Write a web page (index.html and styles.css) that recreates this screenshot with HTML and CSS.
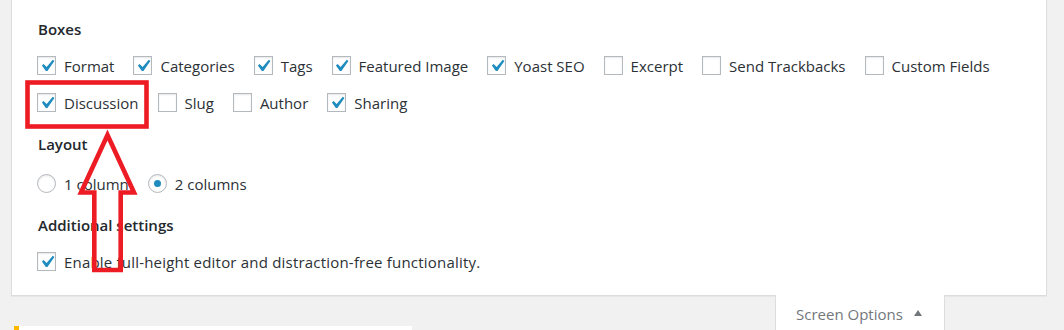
FILE: index.html
```html
<!DOCTYPE html>
<html lang="en">
<head>
    <meta charset="UTF-8">
    <meta name="viewport" content="width=device-width, initial-scale=1.0">
    <title>Screen Options</title>
    <link rel="stylesheet" href="styles.css">
</head>
<body>
<div class="page">
    <div class="screen-meta">
        <div class="group">
            <h5 class="group-title">Boxes</h5>
            <div class="options">
                <label class="opt"><span class="cb checked"><svg viewBox="0 0 20 20"><path d="M14.83 4.89l1.34.94-5.81 8.38H9.02L5.78 9.67l1.34-1.25 2.57 2.4z"/></svg></span>Format</label>
                <label class="opt"><span class="cb checked"><svg viewBox="0 0 20 20"><path d="M14.83 4.89l1.34.94-5.81 8.38H9.02L5.78 9.67l1.34-1.25 2.57 2.4z"/></svg></span>Categories</label>
                <label class="opt"><span class="cb checked"><svg viewBox="0 0 20 20"><path d="M14.83 4.89l1.34.94-5.81 8.38H9.02L5.78 9.67l1.34-1.25 2.57 2.4z"/></svg></span>Tags</label>
                <label class="opt"><span class="cb checked"><svg viewBox="0 0 20 20"><path d="M14.83 4.89l1.34.94-5.81 8.38H9.02L5.78 9.67l1.34-1.25 2.57 2.4z"/></svg></span>Featured Image</label>
                <label class="opt"><span class="cb checked"><svg viewBox="0 0 20 20"><path d="M14.83 4.89l1.34.94-5.81 8.38H9.02L5.78 9.67l1.34-1.25 2.57 2.4z"/></svg></span>Yoast SEO</label>
                <label class="opt"><span class="cb"></span>Excerpt</label>
                <label class="opt"><span class="cb"></span>Send Trackbacks</label>
                <label class="opt"><span class="cb"></span>Custom Fields</label>
                <label class="opt"><span class="cb checked"><svg viewBox="0 0 20 20"><path d="M14.83 4.89l1.34.94-5.81 8.38H9.02L5.78 9.67l1.34-1.25 2.57 2.4z"/></svg></span>Discussion</label>
                <label class="opt"><span class="cb"></span>Slug</label>
                <label class="opt"><span class="cb"></span>Author</label>
                <label class="opt"><span class="cb checked"><svg viewBox="0 0 20 20"><path d="M14.83 4.89l1.34.94-5.81 8.38H9.02L5.78 9.67l1.34-1.25 2.57 2.4z"/></svg></span>Sharing</label>
            </div>
        </div>
        <div class="group">
            <h5 class="group-title">Layout</h5>
            <div class="options radios">
                <label class="opt"><span class="radio"></span>1 column</label>
                <label class="opt"><span class="radio checked"></span>2 columns</label>
            </div>
        </div>
        <div class="group">
            <h5 class="group-title">Additional settings</h5>
            <div class="options">
                <label class="opt long"><span class="cb checked"><svg viewBox="0 0 20 20"><path d="M14.83 4.89l1.34.94-5.81 8.38H9.02L5.78 9.67l1.34-1.25 2.57 2.4z"/></svg></span>Enable full-height editor and distraction-free functionality.</label>
            </div>
        </div>
    </div>

    <div class="tabs">
        <div class="tab">Screen Options <span class="caret"></span></div>
    </div>

    <div class="notice"></div>

    <!-- annotation drawn over the screenshot -->
    <svg class="annot" width="1064" height="330" viewBox="0 0 1064 330">
        <rect x="27.5" y="82.5" width="119" height="44" />
        <polygon points="107.5,135 81,192.5 94.3,192.5 94.3,270 120.7,270 120.7,192.5 134,192.5" />
    </svg>
</div>
</body>
</html>
```

FILE: styles.css
```css
body { margin: 0; background: #f1f1f1; font-family: "Open Sans", "Noto Sans", sans-serif; font-size: 15px; color: #2c3136; }
.page { position: relative; height: 330px; overflow: hidden; padding-left: 11px; }

.screen-meta { box-sizing: border-box; width: 1036px; background: #fff; border: 1px solid #ddd; border-top: none; padding: 19px 0 15px 26px; box-shadow: 0 1px 1px rgba(0,0,0,.04); }
.group + .group { margin-top: 13px; }
.group-title { margin: 0; font-size: 15px; font-weight: 600; line-height: 20px; color: #23282d; }
.options { display: flex; flex-wrap: wrap; margin-top: 8px; }
.options.radios { margin-top: 11px; }
.opt { display: flex; align-items: center; gap: 8px; height: 37px; margin-right: 20px; line-height: 20px; white-space: nowrap; }
.opt.long { letter-spacing: 0.2px; }

.cb, .radio { box-sizing: border-box; width: 19px; height: 19px; margin-left: -1px; border: 1px solid #b4b9be; background: #fff; box-shadow: inset 0 1px 2px rgba(0,0,0,.1); display: flex; align-items: center; justify-content: center; flex-shrink: 0; }
.cb svg { width: 24px; height: 24px; flex-shrink: 0; fill: #1e8cbe; }
.radio { border-radius: 50%; }
.radio.checked::before { content: ""; width: 7px; height: 7px; border-radius: 50%; background: #1e8cbe; }

.tabs { display: flex; justify-content: flex-end; width: 1036px; height: 30px; padding-right: 102px; box-sizing: border-box; }
.tab { box-sizing: border-box; width: 170px; height: 40px; margin-top: -1px; padding: 9px 0 0 20px; background: #fff; border: 1px solid #ddd; border-top: none; color: #72777c; line-height: 20px; display: flex; align-items: flex-start; gap: 11px; }
.caret { width: 0; height: 0; margin-top: 6px; border-left: 4.5px solid transparent; border-right: 4.5px solid transparent; border-bottom: 6px solid #72777c; }

.notice { box-sizing: border-box; width: 398px; height: 20px; margin-left: 3px; border-left: 5px solid #ffb900; background: #fff; }

.annot { position: absolute; top: 0; left: 0; pointer-events: none; }
.annot rect, .annot polygon { fill: none; stroke: #ed1c24; stroke-width: 4.6; stroke-linejoin: miter; stroke-miterlimit: 10; }
```
